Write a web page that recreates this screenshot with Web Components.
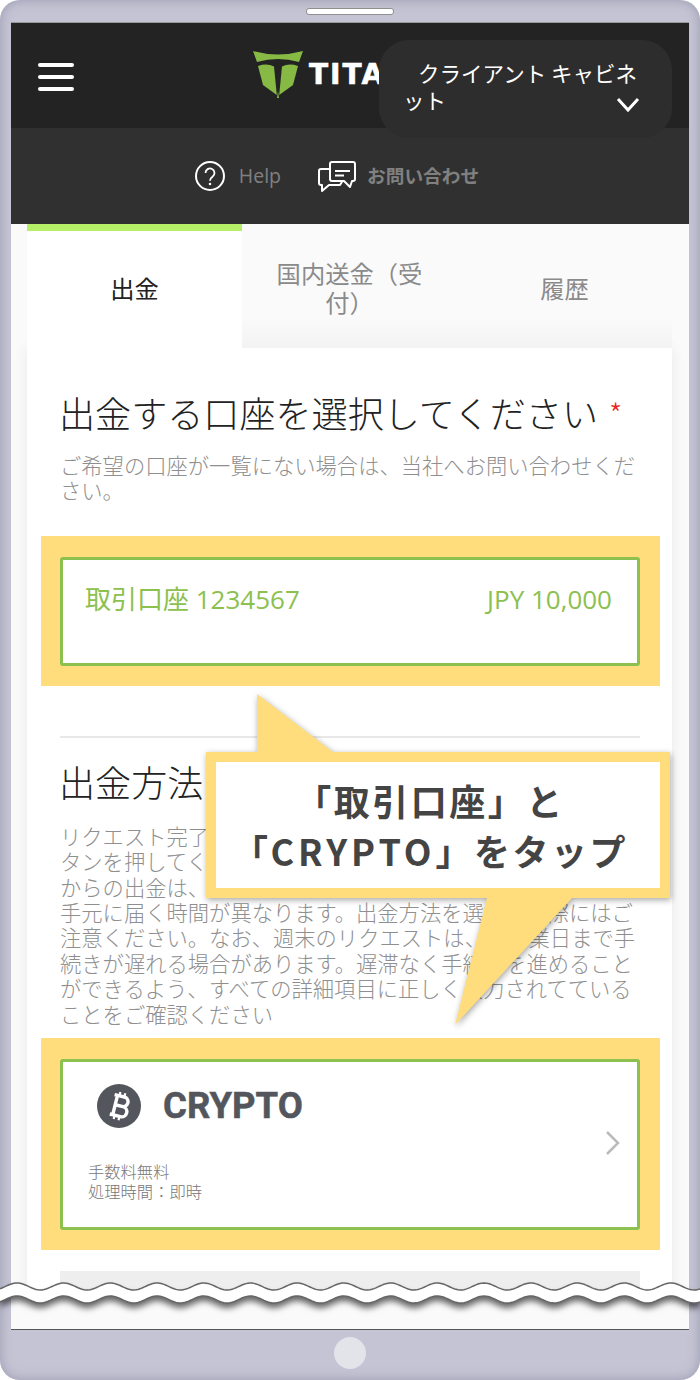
<!DOCTYPE html>
<html lang="ja">
<head>
<meta charset="utf-8">
<title>出金</title>
<style>
html,body{margin:0;padding:0;background:#fff}
body{font-family:"Noto Sans CJK JP","Noto Sans",sans-serif;color:#333}
</style>
</head>
<body>
<phone-frame>
  <top-bar></top-bar>
  <help-bar></help-bar>
  <tab-strip></tab-strip>
  <form-card>
    <h-line req>出金する口座を選択してください</h-line>
    <p-note style="margin-top:15px">ご希望の口座が一覧にない場合は、当社へお問い合わせください。</p-note>
    <pick-row style="margin-top:33px"><account-box></account-box></pick-row>
    <div style="height:2px;background:#e8e8e8;margin:50px 0 19px"></div>
    <h-line>出金方法</h-line>
    <p-note style="margin-top:18px">リクエスト完了<br>タンを押してく<br>からの出金は、<br>手元に届く時間が異なります。出金方法を選択する際にはご<br>注意ください。なお、週末のリクエストは、翌営業日まで手<br>続きが遅れる場合があります。遅滞なく手続きを進めること<br>ができるよう、すべての詳細項目に正しく入力されてている<br>ことをご確認ください</p-note>
    <pick-row style="margin-top:12px"><crypto-box></crypto-box></pick-row>
    <div style="height:90px;background:#eee;margin-top:21px"></div>
  </form-card>
</phone-frame>

<script>
class PhoneFrame extends HTMLElement {
  constructor() {
    super();
    const root = this.attachShadow({ mode: "open" });
    root.innerHTML = `
<style>
:host{display:block;position:relative;width:700px;height:1380px;overflow:hidden}
.body{
  box-sizing:border-box;width:700px;height:1380px;padding:22px 11px 50px;
  background:#c4c4d4;border-radius:20px;
  box-shadow:inset 0 0 12px rgba(120,120,150,.55);
}
.speaker{
  position:absolute;left:306px;top:8px;width:88px;height:7px;box-sizing:border-box;
  background:#fff;border:1px solid #8f8f8f;border-radius:3px;
}
.home{position:absolute;left:334px;top:1337px;width:32px;height:32px;border-radius:50%;background:#e3e3ea}
.screen{
  box-sizing:border-box;height:1308px;overflow:hidden;background:#fafafa;
  border-top:1px solid #999;border-bottom:2px solid #555;
}
</style>
<div class="body"><div class="screen"><slot></slot></div></div>
<div class="speaker"></div>
<div class="home"></div>
<call-out></call-out>
<torn-edge></torn-edge>`;
  }
}
customElements.define("phone-frame", PhoneFrame);

class TopBar extends HTMLElement {
  constructor() {
    super();
    const root = this.attachShadow({ mode: "open" });
    root.innerHTML = `
<style>
:host{display:flex;align-items:center;position:relative;height:105px;background:#232323}
.burger{display:flex;flex-direction:column;gap:8px;width:36px;margin:2px 0 0 27px}
.burger i{display:block;height:4px;border-radius:2px;background:#fff}
.logo{display:flex;align-items:center;gap:6px;margin:-2px 0 0 179px}
.logo svg{display:block}
.word{font:700 28px/28px "DejaVu Sans",sans-serif;color:#fff;letter-spacing:2px;-webkit-text-stroke:.6px #fff}
.cabinet{
  position:absolute;left:368px;top:17px;width:293px;height:98px;box-sizing:border-box;
  padding:19px 30px 0 24px;border-radius:30px;background:#2d2d2d;color:#fff;
  font-size:21.500px;line-height:27px;text-indent:15px;
}
.cabinet svg{position:absolute;left:237px;top:57px}
</style>
<div class="burger"><i></i><i></i><i></i></div>
<div class="logo">
  <svg width="50" height="47" viewBox="0 0 50 47" fill="#87ba45">
    <path d="M0 0Q24.5 7 50 0L46 11Q25 5 4 11Z"/>
    <path d="M5 15Q14 12 21 15.500L23.800 44L10 34Z"/>
    <path d="M45 15Q36 12 29 15.500L26.200 44L40 34Z"/>
    <path d="M24 47L25 40L26 47Z"/>
  </svg>
  <span class="word">TITAN</span>
</div>
<div class="cabinet">クライアント キャビネット
  <svg width="24" height="15" viewBox="0 0 24 15" fill="none" stroke="#fff" stroke-width="3"><path d="M2 2L12 13L22 2"/></svg>
</div>`;
  }
}
customElements.define("top-bar", TopBar);

class HelpBar extends HTMLElement {
  constructor() {
    super();
    const root = this.attachShadow({ mode: "open" });
    root.innerHTML = `
<style>
:host{display:flex;align-items:center;justify-content:center;height:96px;box-sizing:border-box;padding:0 26px 0 0;background:#303030;color:#808080}
svg{display:block}
.help{font:19.500px/24px "Open Sans",sans-serif;margin:0 37px 0 14px}
.ask{font-size:18.700px;font-weight:700;line-height:24px;margin:-3px 0 0 11px}
</style>
<svg width="30" height="30" viewBox="0 0 30 30" fill="none" stroke="#fff" stroke-width="2">
  <circle cx="15" cy="15" r="14"/>
  <path d="M10.500 12a4.500 4.500 0 1 1 7 3.700c-1.700 1.200-2.500 2-2.500 4" stroke-width="1.800"/>
  <circle cx="15" cy="23" r=".6" stroke-width="1.400"/>
</svg>
<span class="help">Help</span>
<svg width="38" height="32" viewBox="0 0 38 32" fill="none" stroke="#fff" stroke-width="2" stroke-linejoin="round">
  <path d="M14 2H35a2 2 0 0 1 2 2V19a2 2 0 0 1-2 2H34L32 27L26 21H14a2 2 0 0 1-2-2V4a2 2 0 0 1 2-2Z"/>
  <path d="M12 9H3a2 2 0 0 0-2 2V23a2 2 0 0 0 2 2H4V31L11 25H22L24.500 21"/>
  <path d="M17 11H32M17 15.500H26"/>
</svg>
<span class="ask">お問い合わせ</span>`;
  }
}
customElements.define("help-bar", HelpBar);

class TabStrip extends HTMLElement {
  constructor() {
    super();
    const root = this.attachShadow({ mode: "open" });
    root.innerHTML = `
<style>
:host{display:grid;grid-template-columns:215px 215px 215px;height:124px;margin:0 17px 0 16px;font-size:24.300px;line-height:29px;color:#8a8a8a}
div{display:flex;align-items:center;justify-content:center;text-align:center;box-sizing:border-box;padding:2px 30px 0;background:linear-gradient(#fafafa 75%,#f3f3f3)}
.on{background:#fff;border-top:7px solid #b6f069;color:#222;padding-bottom:5px;padding-top:0}
</style>
<div class="on">出金</div><div>国内送金（受付）</div><div>履歴</div>`;
  }
}
customElements.define("tab-strip", TabStrip);

class FormCard extends HTMLElement {
  constructor() {
    super();
    const root = this.attachShadow({ mode: "open" });
    root.innerHTML = `
<style>
:host{display:block;box-sizing:border-box;margin:0 17px 0 16px;padding:40px 32px 0 33px;height:1000px;background:#fff;box-shadow:0 0 14px rgba(0,0,0,.07)}
</style><slot></slot>`;
  }
}
customElements.define("form-card", FormCard);

class HLine extends HTMLElement {
  constructor() {
    super();
    const root = this.attachShadow({ mode: "open" });
    root.innerHTML = `
<style>
:host{display:block;margin-left:-1px;font-size:36.100px;font-weight:300;line-height:48px;color:#222;white-space:nowrap}
.req{display:none;color:#e8261c;font-size:30px;margin-left:11px;vertical-align:2px}
:host([req]) .req{display:inline}
</style><slot></slot><span class="req">*</span>`;
  }
}
customElements.define("h-line", HLine);

class PNote extends HTMLElement {
  constructor() {
    super();
    const root = this.attachShadow({ mode: "open" });
    root.innerHTML = `
<style>
:host{display:block;font-size:21.300px;font-weight:300;line-height:25.400px;color:#8f8f8f}
</style><slot></slot>`;
  }
}
customElements.define("p-note", PNote);

class PickRow extends HTMLElement {
  constructor() {
    super();
    const root = this.attachShadow({ mode: "open" });
    root.innerHTML = `
<style>
:host{display:block;margin:0 -20px 0 -19px;padding:21px 20px 20px 19px;background:#ffdd7c}
</style><slot></slot>`;
  }
}
customElements.define("pick-row", PickRow);

class AccountBox extends HTMLElement {
  constructor() {
    super();
    const root = this.attachShadow({ mode: "open" });
    root.innerHTML = `
<style>
:host{
  display:flex;justify-content:space-between;box-sizing:border-box;height:109px;padding:22px 25px 0 22px;
  border:3px solid #8cc04f;border-radius:3px;background:#fff;color:#8cc04f;
  font:26px/34px "Open Sans","Noto Sans CJK JP",sans-serif;
}
</style>
<span>取引口座 1234567</span><span>JPY 10,000</span>`;
  }
}
customElements.define("account-box", AccountBox);

class CryptoBox extends HTMLElement {
  constructor() {
    super();
    const root = this.attachShadow({ mode: "open" });
    root.innerHTML = `
<style>
:host{display:block;position:relative;box-sizing:border-box;height:171px;padding:22px 0 0 25px;border:3px solid #8cc04f;border-radius:3px;background:#fff}
.brand{display:flex;align-items:center;gap:22px;margin-left:9px}
.brand svg{display:block}
.brand b{font:700 36.500px/44px Roboto,sans-serif;color:#53565c;-webkit-text-stroke:.5px #53565c}
.fee{margin-top:33px;font-size:16.300px;font-weight:300;line-height:20px;color:#777}
.go{position:absolute;left:542px;top:69px}
</style>
<div class="brand">
  <svg width="44" height="44" viewBox="0 0 44 44">
    <circle cx="22" cy="22" r="22" fill="#53565c"/>
    <g transform="rotate(14 22 22)" fill="none" stroke="#fff" stroke-width="3.400">
      <path d="M15 12H25a4.700 4.700 0 0 1 0 9.700H18M18 21.700H26a5 5 0 0 1 0 10.300H15M18 12V32"/>
      <path d="M20 8V12M25 8V12M20 32V36M25 32V36" stroke-width="2.200"/>
    </g>
  </svg>
  <b>CRYPTO</b>
</div>
<div class="fee">手数料無料<br>処理時間：即時</div>
<svg class="go" width="15" height="24" viewBox="0 0 15 24" fill="none" stroke="#bbb" stroke-width="2.500"><path d="M2 1L13 12L2 23"/></svg>`;
  }
}
customElements.define("crypto-box", CryptoBox);

class CallOut extends HTMLElement {
  constructor() {
    super();
    const root = this.attachShadow({ mode: "open" });
    root.innerHTML = `
<style>
:host{
  display:block;position:absolute;z-index:1;left:205px;top:694px;width:465px;height:332px;box-sizing:border-box;
  padding:81px 25px 0 10px;text-align:center;color:#444;font-size:36px;font-weight:700;line-height:50px;letter-spacing:2.500px;white-space:nowrap;
}
svg{position:absolute;left:0;top:0;z-index:-1;overflow:visible;filter:drop-shadow(1px 2px 3px rgba(0,0,0,.35))}
.latin{letter-spacing:4px}
</style>
<svg width="465" height="332" viewBox="0 0 465 332">
  <path fill="#ffdd7c" d="M1 58H52V0L128 58H465V204H367L250 331L282 204H1Z"/>
  <rect x="11" y="68" width="444" height="126" fill="#fff"/>
</svg>
「取引口座」と<br>「<span class="latin">CRYPTO</span>」をタップ`;
  }
}
customElements.define("call-out", CallOut);

class TornEdge extends HTMLElement {
  constructor() {
    super();
    const root = this.attachShadow({ mode: "open" });
    const pts = (y) => {
      const out = [];
      for (let x = 0; x <= 700; x += 2) {
        out.push(x + " " + (y - 3.5 * Math.cos(((x - 17) / 46.7) * 2 * Math.PI)).toFixed(2));
      }
      return out;
    };
    const up = pts(6.5), low = pts(19.5);
    root.innerHTML = `
<style>
:host{display:block;position:absolute;z-index:2;left:0;top:1280px;width:700px;height:49px;pointer-events:none}
svg{display:block;overflow:visible}
.shade{filter:drop-shadow(0 5px 3px rgba(0,0,0,.6))}
</style>
<svg width="700" height="49" viewBox="0 0 700 49">
  <rect x="11" y="16" width="678" height="33" fill="#fafafa"/>
  <path class="shade" d="M${up.join("L")}L${low.slice().reverse().join("L")}Z" fill="#fff"/>
  <path d="M${up.join("L")}" fill="none" stroke="#666" stroke-width="1.500"/>
  <path d="M${low.join("L")}" fill="none" stroke="#666" stroke-width="1.500"/>
</svg>`;
  }
}
customElements.define("torn-edge", TornEdge);
</script>
</body>
</html>
